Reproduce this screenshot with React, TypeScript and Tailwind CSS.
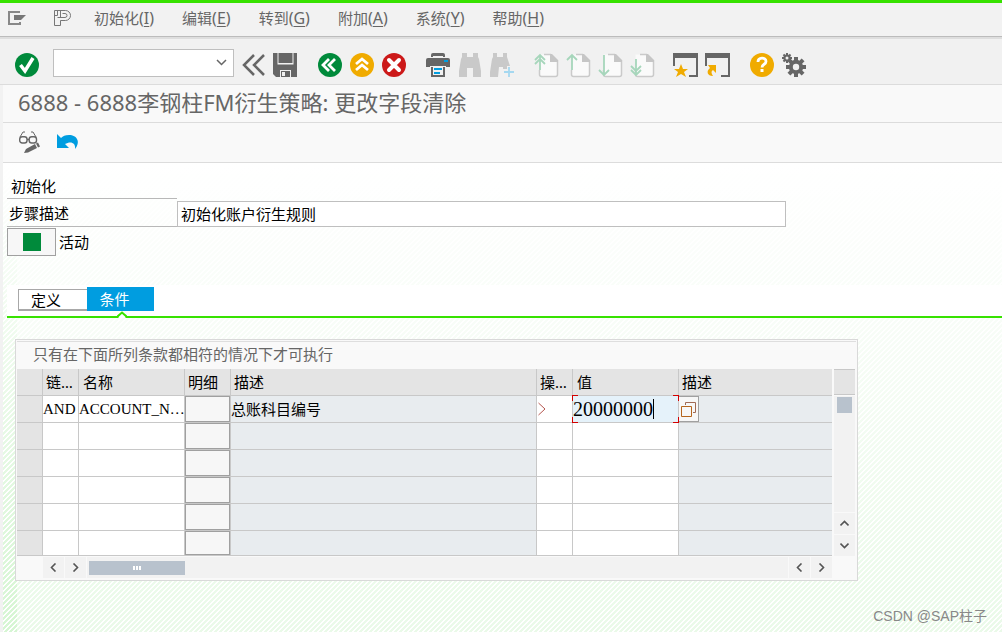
import type { ReactNode } from 'react';

const menus = [
  { label: '初始化', key: 'I' },
  { label: '编辑', key: 'E' },
  { label: '转到', key: 'G' },
  { label: '附加', key: 'A' },
  { label: '系统', key: 'Y' },
  { label: '帮助', key: 'H' },
];

const rows = [
  { link: 'AND', name: 'ACCOUNT_N…', text: '总账科目编号', value: '20000000' },
  null,
  null,
  null,
  null,
  null,
];

function Icon({ children }: { children: ReactNode }) {
  return (
    <svg width="24" height="24" viewBox="0 0 24 24" fill="none" className="block overflow-visible">
      {children}
    </svg>
  );
}

function IconButton({ label, children }: { label: string; children: ReactNode }) {
  return (
    <button type="button" aria-label={label} className="h-6 w-6 shrink-0">
      <Icon>{children}</Icon>
    </button>
  );
}

function Sheet() {
  return (
    <>
      <path d="M5.500 1.500H17L23.500 8V23.500H5.500V17" fill="#fafafa" />
      <path d="M10 1.500h7M23.500 7v14.500a2 2 0 0 1-2 2h-14a2 2 0 0 1-2-2V17" stroke="#cacaca" strokeWidth="1.500" />
      <path d="M16 1h2l6 6v2h-8z" fill="#c6c6c6" />
    </>
  );
}

function WindowFrame() {
  return <path d="M-1 0h25v24h-9v-2h7V5H1v8h-2z" fill="#666" />;
}

function Gear({ cx, cy, r, hole, teeth, w }: { cx: number; cy: number; r: number; hole: number; teeth: number; w: number }) {
  return (
    <g>
      {Array.from({ length: teeth }, (_, i) => (
        <path
          key={i}
          d={`M${cx} ${cy}v${-r}`}
          stroke="#666"
          strokeWidth={w}
          transform={`rotate(${(i * 360) / teeth} ${cx} ${cy})`}
        />
      ))}
      <circle cx={cx} cy={cy} r={r * 0.72} fill="#666" />
      <circle cx={cx} cy={cy} r={hole} fill="#f1f1f1" />
    </g>
  );
}

function ScrollButton({ label, d }: { label: string; d: string }) {
  return (
    <button type="button" aria-label={label} className="flex h-[21px] w-[21px] shrink-0 items-center justify-center bg-[#f2f2f2]">
      <svg width="9" height="9" viewBox="0 0 9 9" fill="none" stroke="#555" strokeWidth="1.600">
        <path d={d} />
      </svg>
    </button>
  );
}

const LEFT = 'M6.500 .5l-4 4 4 4';
const RIGHT = 'M2.500 .5l4 4-4 4';
const UP = 'M.5 6.500l4-4 4 4';
const DOWN = 'M.5 2.500l4 4 4-4';

function MenuBar() {
  return (
    <nav className="flex h-[34px] items-center border-b border-[#bcbcbc] bg-[#f2f2f2] pb-1 pl-2 text-[15px] text-[#666]">
      <button type="button" aria-label="菜单" className="w-[45px]">
        <svg width="18" height="14" viewBox="0 0 18 14" fill="none">
          <path d="M12 1H1v12h11v-2" stroke="#888" strokeWidth="2" />
          <path d="M6 4h12l-5 5H6z" fill="#777" />
        </svg>
      </button>
      <button type="button" aria-label="P" className="w-[41px]">
        <svg width="19" height="18" viewBox="0 0 19 18" fill="none" stroke="#777">
          <path d="M1.500 16.500V1.500H12.500a5 5 0 0 1 0 10H7.500v5zM9.500 4.500H12a2 2 0 0 1 0 4H4.500M7.500 1.500v7M1.500 6.500h3v-5" />
        </svg>
      </button>
      <div className="flex gap-7">
        {menus.map(m => (
          <button key={m.key} type="button" className="flex items-center whitespace-nowrap leading-5">
            {m.label}
            <span className="text-base leading-5">
              (<u className="underline-offset-2">{m.key}</u>)
            </span>
          </button>
        ))}
      </div>
    </nav>
  );
}

function Toolbar() {
  return (
    <div className="flex h-[48px] items-center gap-5 border-t-2 border-b border-t-[#dedede] border-b-[#dcdcdc] bg-[#f1f1f1] pt-1.5 pl-[15px]">
      <div className="flex items-center gap-2">
        <IconButton label="回车">
          <circle cx="12" cy="12" r="12" fill="#008a3b" />
          <path d="M5.500 12l4.500 6L18 5" stroke="#fff" strokeWidth="3.500" />
        </IconButton>
        <div className="mb-1 ml-1.5 flex h-7 w-[181px] items-center border border-[#bfbfbf] bg-white">
          <input aria-label="命令" className="h-full min-w-0 flex-1 px-1 outline-none" />
          <button type="button" aria-label="历史记录" className="px-1.5">
            <svg width="11" height="7" viewBox="0 0 11 7" fill="none" stroke="#666" strokeWidth="1.500">
              <path d="M1 1l4.500 4.500L10 1" />
            </svg>
          </button>
        </div>
        <IconButton label="收起">
          <path d="M12 2L2 12l10 10M22 2L12 12l10 10" stroke="#666" strokeWidth="2.500" />
        </IconButton>
        <IconButton label="保存">
          <path d="M-1 0h24v24H2l-3-3z" fill="#666" />
          <path d="M3.500 0h1v10h14V0h1v11.500h-16z" fill="#f1f1f1" />
          <path d="M6 24v-7h11v7h-1v-6H7v6z" fill="#f1f1f1" />
          <path d="M8 19h3v4H8z" fill="#f1f1f1" />
        </IconButton>
      </div>
      <div className="flex gap-2">
        <IconButton label="返回">
          <circle cx="12" cy="12" r="12" fill="#008a3b" />
          <path d="M11 6l-6 6 6 6M17 6l-6 6 6 6" stroke="#fff" strokeWidth="2.800" />
        </IconButton>
        <IconButton label="退出">
          <circle cx="12" cy="12" r="12" fill="#f0ab00" />
          <path d="M6 11l6-5 6 5M6 17l6-5 6 5" stroke="#fff" strokeWidth="2.800" />
        </IconButton>
        <IconButton label="取消">
          <circle cx="12" cy="12" r="12" fill="#cc1919" />
          <path d="M7 7l10 10M17 7L7 17" stroke="#fff" strokeWidth="4" strokeLinecap="round" />
        </IconButton>
      </div>
      <div className="flex gap-2">
        <IconButton label="打印">
          <path d="M5 4V2a2 2 0 0 1 2-2h10a2 2 0 0 1 2 2v2h-2V3H7v1zM2 5h20a2 2 0 0 1 2 2v7H0V7a2 2 0 0 1 2-2z" fill="#666" />
          <path d="M4 13h16v3H4z" fill="#f1f1f1" />
          <path d="M6 14v9h12v-9" stroke="#666" strokeWidth="2" />
          <path d="M18 7h4v2h-4zM8 15h8v2H8zM8 19h6v2H8z" fill="#009de0" />
        </IconButton>
        <IconButton label="查找">
          <path d="M4 0h5v4h6V0h5v4l1 2 2 12v6h-8v-9H9v9H1v-6L3 6l1-2z" fill="#c9c9c9" />
        </IconButton>
        <IconButton label="继续查找">
          <path d="M3 0h4v4h6V0h4v4l3 9h-3v3h-4v-2H9l-1 10H0v-5L2 6l1-2z" fill="#c9c9c9" />
          <path d="M19 14v10M14 19h10" stroke="#a5d8f0" strokeWidth="1.800" />
        </IconButton>
      </div>
      <div className="flex gap-2">
        <IconButton label="首页">
          <Sheet />
          <path d="M6 17V2M1 7l5-5 5 5M1 11l5-5 5 5" stroke="#a6d6bb" strokeWidth="1.800" />
        </IconButton>
        <IconButton label="上一页">
          <Sheet />
          <path d="M6 17V2M1 7l5-5 5 5" stroke="#a6d6bb" strokeWidth="1.800" />
        </IconButton>
        <IconButton label="下一页">
          <Sheet />
          <path d="M6 2v20M1 17l5 5 5-5" stroke="#a6d6bb" strokeWidth="1.800" />
        </IconButton>
        <IconButton label="末页">
          <Sheet />
          <path d="M6 6v16M1 17l5 5 5-5M1 13l5 5 5-5" stroke="#a6d6bb" strokeWidth="1.800" />
        </IconButton>
      </div>
      <div className="flex gap-2">
        <IconButton label="新建会话">
          <WindowFrame />
          <path d="M7 11l2 5h5l-4 3 2 5-5-3-5 3 2-5-4-3h5z" fill="#f0ab00" />
        </IconButton>
        <IconButton label="创建快捷方式">
          <WindowFrame />
          <path d="M2 12h8v8l-3-3c-2 1-2 3 0 6-6 0-7-5-3-8z" fill="#f0ab00" />
        </IconButton>
      </div>
      <div className="flex gap-2">
        <IconButton label="帮助">
          <circle cx="12" cy="12" r="12" fill="#f0ab00" />
          <path d="M8 9c0-5 8-5 8-.5 0 3-4 2.500-4 6" stroke="#fff" strokeWidth="2.800" />
          <path d="M10.500 16h3v3h-3z" fill="#fff" />
        </IconButton>
        <IconButton label="定制">
          <Gear cx={5} cy={5} r={5} hole={1.5} teeth={8} w={2} />
          <Gear cx={14} cy={14} r={10} hole={3.2} teeth={8} w={4} />
        </IconButton>
      </div>
    </div>
  );
}

function Corners() {
  return (
    <>
      <span className="absolute -top-px -left-px h-1.5 w-1.5 border-t border-l border-[#d40000]" />
      <span className="absolute -top-px -right-px h-1.5 w-1.5 border-t border-r border-[#d40000]" />
      <span className="absolute -bottom-px -left-px h-1.5 w-1.5 border-b border-l border-[#d40000]" />
      <span className="absolute -right-px -bottom-px h-1.5 w-1.5 border-r border-b border-[#d40000]" />
    </>
  );
}

function ConditionTable() {
  const th = 'border-r border-b border-[#c8c8c8] bg-[#e4e4e4] text-left font-normal whitespace-nowrap';
  const cell = 'border-r border-b border-[#c8c8c8] p-0 whitespace-nowrap';
  const td = `${cell} bg-white`;
  const ro = `${cell} bg-[#e8ecef]`;
  return (
    <table className="w-full min-w-0 flex-1 table-fixed border-separate border-spacing-0 text-[15px] leading-5">
      <colgroup>
        <col className="w-[26px]" />
        <col className="w-[36px]" />
        <col className="w-[106px]" />
        <col className="w-[46px]" />
        <col className="w-[306px]" />
        <col className="w-[36px]" />
        <col className="w-[106px]" />
        <col />
      </colgroup>
      <thead>
        <tr className="h-[27px]">
          <th className={th} aria-label="行" />
          <th className={`${th} pl-[3px]`}>链…</th>
          <th className={`${th} pl-1`}>名称</th>
          <th className={`${th} pl-[3px]`}>明细</th>
          <th className={`${th} pl-[3px]`}>描述</th>
          <th className={`${th} pl-[3px]`}>操…</th>
          <th className={`${th} pl-1`}>值</th>
          <th className={`${th} border-r-0 pl-[3px]`}>描述</th>
        </tr>
      </thead>
      <tbody>
        {rows.map((r, i) => (
          <tr key={i} className={i === rows.length - 1 ? 'h-[25px]' : 'h-[27px]'}>
            <td className={`${cell} bg-[#e4e4e4]`} />
            <td className={`${td} font-['Liberation_Serif']`}>{r?.link}</td>
            <td className={`${td} font-['Liberation_Serif']`}>{r?.name}</td>
            <td className={td}>
              <button
                type="button"
                aria-label="明细"
                className={`block w-full border border-[#a0a0a0] bg-[#f7f7f7] ${i === rows.length - 1 ? 'h-6' : 'h-[26px]'}`}
              />
            </td>
            <td className={ro}>{r?.text}</td>
            <td className={td}>
              {r && (
                <svg width="10" height="14" viewBox="0 0 10 14" fill="none" stroke="#b5564f">
                  <path d="M1.500 1l6.500 6-6.500 6" />
                </svg>
              )}
            </td>
            <td className={td}>
              {r && (
                <div className="relative flex h-[26px] items-center bg-[#e5f2fa]">
                  <input
                    aria-label="值"
                    defaultValue={r.value}
                    className="w-20 font-['Liberation_Serif'] text-xl leading-6 outline-none"
                  />
                  <span className="h-5 w-px bg-black" />
                  <Corners />
                </div>
              )}
            </td>
            <td className={`${ro} border-r-0`}>
              {r && (
                <button type="button" aria-label="搜索帮助" className="flex h-[26px] w-5 items-center justify-center border border-l-0 border-[#a0a0a0] bg-[#f7f7f7]">
                  <svg width="15" height="15" viewBox="0 0 15 15" fill="none">
                    <path d="M4.500 3V.5h10v10H12" stroke="#a06a55" />
                    <path d="M.5 4.500h10v10H.5z" stroke="#b5651d" />
                  </svg>
                </button>
              )}
            </td>
          </tr>
        ))}
      </tbody>
    </table>
  );
}

function ConditionPanel() {
  return (
    <section className="mt-[21px] mr-[144px] ml-2 border border-[#d9d9d9] bg-[#f9f9f9] p-px">
      <h2 className="h-7 border-t border-[#dedede] pl-4 text-[15px] leading-6 text-[#666]">
        只有在下面所列条款都相符的情况下才可执行
      </h2>
      <div className="flex">
        <ConditionTable />
        <div className="ml-0.5 flex w-[22px] shrink-0 flex-col gap-px">
          <div className="h-[26px] w-[21px] border-t border-b border-[#c8c8c8] bg-[#e4e4e4]" />
          <div className="w-[21px] flex-1 bg-[#f2f2f2] px-[3px] pt-px">
            <div className="h-4 bg-[#b8c2cd]" />
          </div>
          <ScrollButton label="向上" d={UP} />
          <ScrollButton label="向下" d={DOWN} />
        </div>
      </div>
      <div className="mr-6 ml-[26px] flex gap-px pt-px pb-px">
        <ScrollButton label="向左" d={LEFT} />
        <ScrollButton label="向右" d={RIGHT} />
        <div className="flex flex-1 items-center bg-[#f2f2f2] pl-0.5">
          <div className="flex h-3.5 w-24 items-center justify-center gap-px bg-[#b8c2cd]">
            <span className="h-1 w-0.5 bg-white" />
            <span className="h-1 w-0.5 bg-white" />
            <span className="h-1 w-0.5 bg-white" />
          </div>
        </div>
        <ScrollButton label="向左" d={LEFT} />
        <ScrollButton label="向右" d={RIGHT} />
      </div>
    </section>
  );
}

export default function App() {
  return (
    <div className="flex min-h-screen flex-col border-t-[3px] border-[#37e200] bg-[#f2f2f2] font-['Noto_Sans','Noto_Sans_CJK_SC',sans-serif] text-black">
      <MenuBar />
      <Toolbar />
      <div className="ml-[3px] flex flex-1 flex-col bg-white">
        <h1 className="h-[38px] border-b border-[#dcdcdc] bg-[#f9f9f9] pl-[15px] text-[22px] leading-[34px] text-[#666]">
          6888 - 6888李钢柱FM衍生策略: 更改字段清除
        </h1>
        <div className="flex h-10 items-center gap-3.5 border-b border-[#dcdcdc] bg-[#f9f9f9] pl-[15px]">
          <IconButton label="显示/更改">
            <path d="M2 6l3-5h2M18 6l-3-5h-2" stroke="#666" />
            <rect x="1.700" y="5.700" width="7.300" height="6.300" rx="2.500" stroke="#666" strokeWidth="1.400" />
            <rect x="11.200" y="5.700" width="7.300" height="6.300" rx="2.500" stroke="#666" strokeWidth="1.400" />
            <path d="M9 8.500h2" stroke="#666" strokeWidth="1.400" />
            <path d="M6 22l2-4 9-5 2 4-9 4.500zM18 12.500l2-1 2 4-2 1z" fill="#666" />
          </IconButton>
          <IconButton label="撤销">
            <path d="M1 3v14h12l-4-4c5-3 11-2 10 5 6-7 2-14-6-14-4 0-6 1-8 3z" fill="#009de0" />
          </IconButton>
        </div>
        <main className="flex-1 bg-[linear-gradient(to_bottom,#ffffff,#ffffff00_500px),linear-gradient(to_right,#ffffff00_14px,#ffffff80_14px),linear-gradient(135deg,#d3f5d0_25%,#ffffff_25%,#ffffff_50%,#d3f5d0_50%,#d3f5d0_75%,#ffffff_75%)] bg-[size:100%_100%,100%_100%,5px_5px] pl-1 text-[15px]">
          <h2 className="w-[170px] border-b border-[#b8b8b8] pt-[11px] pl-1 leading-6">初始化</h2>
          <div className="flex pt-0.5">
            <label htmlFor="step" className="w-[170px] border-b border-[#b8b8b8] pl-0.5 leading-6">
              步骤描述
            </label>
            <input
              id="step"
              defaultValue="初始化账户衍生规则"
              className="mr-[216px] h-[26px] min-w-0 flex-1 border border-[#bfbfbf] bg-white px-[3px] pb-0.5 outline-none"
            />
          </div>
          <div className="mt-px flex items-center gap-[3px]">
            <button type="button" aria-label="活动" className="flex h-7 w-[49px] items-center justify-center border border-[#a0a0a0] bg-[#f7f7f7]">
              <span className="h-[18px] w-[18px] bg-[#008a3b]" />
            </button>
            <span>活动</span>
          </div>
          <div className="mt-[29px] flex h-[33px] items-start border-b-2 border-[#37e200] bg-white pt-0.5 pl-[11px]" role="tablist">
            <button type="button" role="tab" aria-selected="false" className="mt-0.5 h-[22px] w-[69px] border border-r-0 border-b-2 border-[#a8a8a8] pr-3.5 leading-[18px]">
              定义
            </button>
            <button type="button" role="tab" aria-selected="true" className="relative h-6 w-[67px] bg-[#009de0] pr-3 text-white">
              条件
              <svg width="10" height="7" viewBox="0 0 10 7" fill="none" className="absolute top-6 left-[30px]">
                <path d="M1.500 5h7v2h-7z" fill="#fff" />
                <path d="M.5 5.500L5 1.500l4.500 4" stroke="#37e200" strokeWidth="2" />
              </svg>
            </button>
          </div>
          <ConditionPanel />
          <p className="mt-[25px] mr-[15px] text-right font-['Liberation_Sans','Noto_Sans_CJK_SC',sans-serif] text-sm text-[#888]">
            CSDN @SAP柱子
          </p>
        </main>
      </div>
    </div>
  );
}
